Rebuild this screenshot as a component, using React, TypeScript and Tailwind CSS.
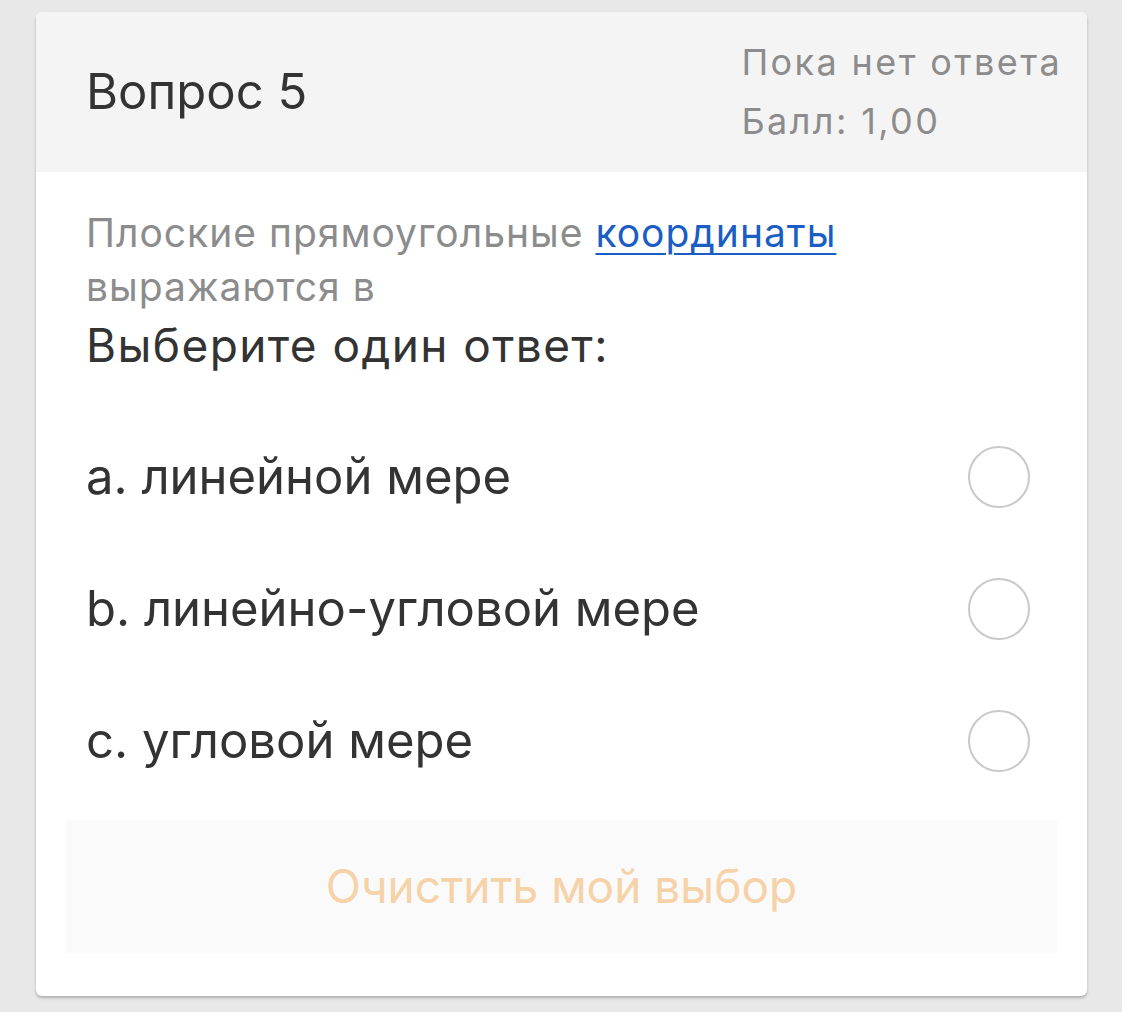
export default function App() {
  const options = [
    { letter: 'a.', text: 'линейной мере' },
    { letter: 'b.', text: 'линейно-угловой мере' },
    { letter: 'c.', text: 'угловой мере' },
  ];

  return (
    <div className="w-[1122px] h-[1012px] bg-[#e8e8e8] pt-[12px] pl-[36px]"
      style={{ fontFamily: "Inter, 'Liberation Sans', Arial, sans-serif" }}>
      <div className="w-[1051px] h-[984px] bg-white rounded-[6px] overflow-hidden shadow-[0_2px_3px_rgba(0,0,0,0.25)] flex flex-col">
        {/* Header */}
        <div className="h-[160px] bg-[#f4f4f4] flex items-center justify-between pl-[50px] pr-[25px]">
          <div className="text-[49px] text-[#333333]">Вопрос 5</div>
          <div className="text-[36px] leading-[59px] tracking-[2.4px] text-[#8c8c8c]">
            <div>Пока нет ответа</div>
            <div>Балл: 1,00</div>
          </div>
        </div>

        {/* Question */}
        <div className="px-[50px] pt-[34px]">
          <p className="text-[39px] leading-[54px] tracking-[1px] text-[#8c8c8c]">
            Плоские прямоугольные{' '}
            <span className="text-[#1a5dc4] underline underline-offset-[6px] decoration-[2px]">координаты</span>
            <br />
            выражаются в
          </p>
          <p className="text-[46px] leading-[62px] tracking-[1.4px] text-[#333333]">Выберите один ответ:</p>
        </div>

        {/* Options */}
        <div className="flex flex-col pt-[35px]">
          {options.map((o) => (
            <div key={o.letter} className="h-[132px] flex items-center justify-between pl-[50px] pr-[57px]">
              <div className="text-[49px] text-[#333333]">
                {o.letter} {o.text}
              </div>
              <div className="w-[62px] h-[62px] rounded-full border-[2.5px] border-[#c9c9c9]" />
            </div>
          ))}
        </div>

        {/* Clear button */}
        <div className="mx-[30px] mt-[13px] h-[133px] bg-[#fafafa] flex items-center justify-center">
          <span className="text-[46px] text-[#f6d2a8]">Очистить мой выбор</span>
        </div>
      </div>
    </div>
  );
}
